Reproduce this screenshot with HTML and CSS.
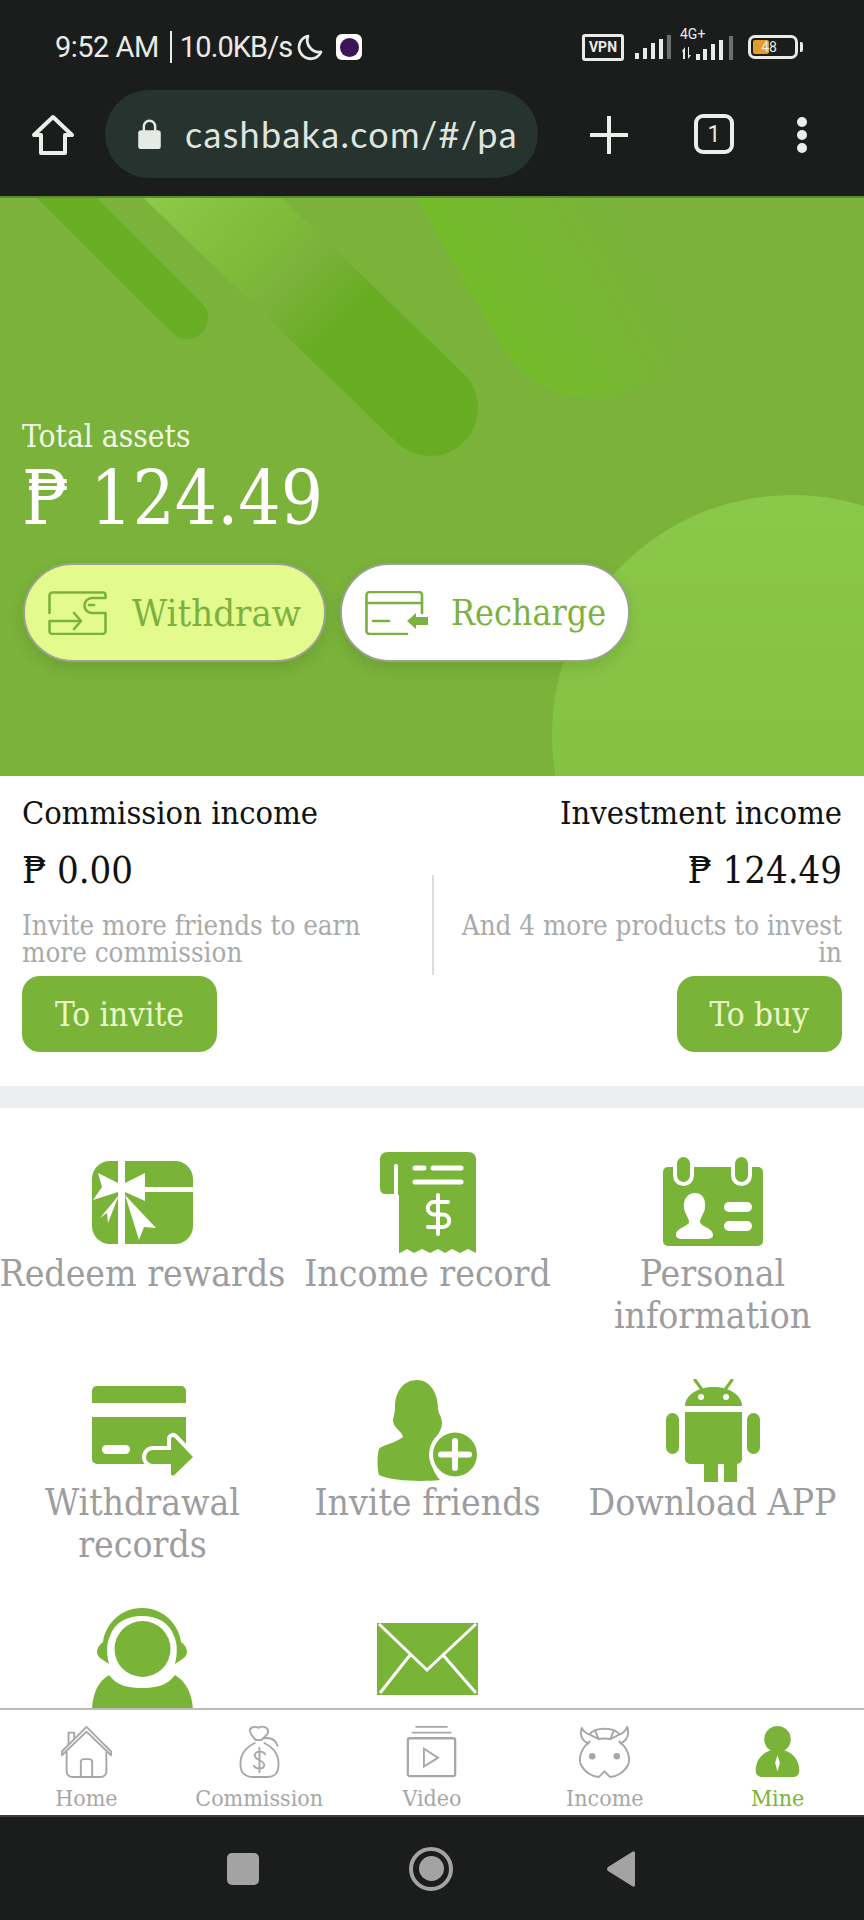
FILE: index.html
```html
<!DOCTYPE html>
<html lang="en">
<head>
<meta charset="utf-8">
<title>Mine</title>
<link rel="stylesheet" href="styles.css">
</head>
<body>
<div class="phone">
  <header class="chrome">
    <div class="status">
      <div class="status-left">
        <span class="time">9:52 AM</span><span class="sep"></span><span class="speed">10.0KB/s</span>
        <svg class="moon" viewBox="0 0 28 28"><path d="M13 3A11.500 11.500 0 1 0 26 19 12 12 0 0 1 13 3Z" fill="none" stroke="#e8ebe6" stroke-width="2.800" stroke-linejoin="round"/></svg>
        <span class="app-badge"><span class="app-dot"></span></span>
      </div>
      <div class="status-right">
        <span class="vpn">VPN</span>
        <svg class="sig" viewBox="0 0 37 26"><g fill="#e8ebe6"><rect x="0" y="19" width="4" height="6"/><rect x="8" y="14" width="4" height="11"/><rect x="16" y="9" width="4" height="16"/><rect x="24" y="5" width="4" height="20"/></g><rect x="32" y="1" width="4" height="24" fill="#6d706d"/></svg>
        <div class="sig2">
          <span class="net">4G+</span>
          <svg class="sig2-svg" viewBox="0 0 57 28"><g fill="#e8ebe6"><path d="M2 18 5 14V26H3V19ZM8 14V26L11 22H9V14Z"/><rect x="16" y="21" width="4" height="6"/><rect x="23" y="16" width="4" height="11"/><rect x="31" y="11" width="4" height="16"/><rect x="39" y="7" width="4" height="20"/></g><rect x="49" y="3" width="4" height="24" fill="#6d706d"/></svg>
        </div>
        <span class="battery"><span class="batt-fill"></span><span class="batt-text">48</span></span><span class="batt-tip"></span>
      </div>
    </div>
    <div class="toolbar">
      <svg class="home-ic" viewBox="0 0 44 44"><path d="M22 4 41 22H34V40H10V22H3Z" fill="none" stroke="#eceeea" stroke-width="4" stroke-linejoin="round"/></svg>
      <div class="urlbar">
        <svg class="lock" viewBox="0 0 26 34"><path d="M7 14V9a6 6 0 0 1 12 0v5" fill="none" stroke="#e6e9e5" stroke-width="2.600"/><rect x="1" y="13" width="24" height="20" rx="3" fill="#e6e9e5"/></svg>
        <span class="url">cashbaka.com/#/pa</span>
      </div>
      <svg class="plus" viewBox="0 0 38 38"><path d="M19 1V37M1 19H37" stroke="#eceeea" stroke-width="4" stroke-linecap="round"/></svg>
      <span class="tabs">1</span>
      <span class="dots"><i></i><i></i><i></i></span>
    </div>
  </header>

  <main class="page">
    <section class="hero">
      <div class="blob blob-a"></div>
      <div class="blob blob-b"></div>
      <div class="blob blob-d"></div>
      <div class="blob blob-e"></div>
      <div class="hero-body">
        <div class="assets-label">Total assets</div>
        <div class="assets-value">₱ 124.49</div>
        <div class="hero-btns">
          <div class="pill pill-lime">
            <svg class="pill-ic" viewBox="0 0 60 44" fill="none" stroke="#7db13f" stroke-width="2.600" stroke-linecap="round" stroke-linejoin="round"><path d="M1.500 22V4.500a3 3 0 0 1 3-3H55a2.500 2.500 0 0 1 2.500 2.500V7H44a7.500 7.500 0 0 0 0 15H57.500V40a3 3 0 0 1-3 3H4.500a3 3 0 0 1-3-3V30H32"/><path d="M26 22 33 30 26 38"/><path d="M41 14H46"/></svg>
            <span>Withdraw</span>
          </div>
          <div class="pill pill-white">
            <svg class="pill-ic pill-ic-wide" viewBox="0 0 64 44" fill="none" stroke="#7db13f" stroke-width="2.600" stroke-linecap="round" stroke-linejoin="round"><path d="M57 22V4a3 3 0 0 0-3-3H4.500a3 3 0 0 0-3 3V40a3 3 0 0 0 3 3H42"/><path d="M1.500 12H57"/><path d="M8 30H24"/><path d="M42 30 51 22V26H63V34H51V38Z" fill="#7db13f" stroke="none"/></svg>
            <span>Recharge</span>
          </div>
        </div>
      </div>
    </section>

    <section class="income">
      <div class="income-col">
        <div class="income-title">Commission income</div>
        <div class="income-value">₱ 0.00</div>
        <div class="income-note">Invite more friends to earn more commission</div>
        <div class="btn">To invite</div>
      </div>
      <div class="income-rule"></div>
      <div class="income-col income-right">
        <div class="income-title">Investment income</div>
        <div class="income-value">₱ 124.49</div>
        <div class="income-note">And 4 more products to invest in</div>
        <div class="btn">To buy</div>
      </div>
    </section>

    <section class="menu">
      <div class="cell">
        <svg class="cell-ic" viewBox="0 0 104 104"><path d="M19 11H27V94H19A18 18 0 0 1 1 76V29A18 18 0 0 1 19 11ZM34 11H84A18 18 0 0 1 102 29V37H34ZM34 42H102V76A18 18 0 0 1 84 94H34Z" fill="#79b439"/><path d="M7 23 27 33H34L54 23V51L34 42H27L2 50 11 37Z" fill="#fff"/><path d="M28 45 9 68 16 63 17 73ZM34 45 65 78 53 77 48 90Z" fill="#fff"/></svg>
        <div class="cell-label cell-label-line">Redeem rewards</div>
      </div>
      <div class="cell">
        <svg class="cell-ic" viewBox="0 0 104 104"><path d="M12 2H92Q100 2 100 10V103L92 99 84 103 76 99 69 103 62 99 54 103 46 99 38 103 31 99 24 103 23 103V44H10Q4 44 4 38V10Q4 2 12 2Z" fill="#79b439"/><rect x="18" y="14" width="4" height="31" rx="2" fill="#fff"/><path d="M22 41H24V45H22Z" fill="#79b439"/><g fill="none" stroke="#fff" stroke-linecap="round"><path d="M39 18H48M57 18H85M39 32H85" stroke-width="5"/><path d="M72 52H58a5.500 5.500 0 0 0 0 12.500H67a6 6 0 0 1 0 12.500H52M62 45V84" stroke-width="4"/></g></svg>
        <div class="cell-label">Income record</div>
      </div>
      <div class="cell">
        <svg class="cell-ic" viewBox="0 0 104 104"><path d="M7 17H97A5 5 0 0 1 102 22V91A5 5 0 0 1 97 96H7A5 5 0 0 1 2 91V22A5 5 0 0 1 7 17Z" fill="#79b439"/><rect x="12" y="2" width="21" height="34" rx="10.500" fill="#fff"/><rect x="70" y="2" width="21" height="34" rx="10.500" fill="#fff"/><rect x="12" y="2" width="21" height="15" fill="#fff"/><rect x="70" y="2" width="21" height="15" fill="#fff"/><rect x="16" y="7" width="13" height="25" rx="6.500" fill="#79b439"/><rect x="74" y="7" width="13" height="25" rx="6.500" fill="#79b439"/><path d="M34 43C42 43 45 50 44 58 43 64 39 68 39 72 39 76 52 78 52 85 52 88 49 89 45 89H22C18 89 15 88 15 85 15 78 28 76 28 72 28 68 24 64 23 58 22 50 26 43 34 43Z" fill="#fff"/><rect x="63" y="52" width="28" height="10" rx="5" fill="#fff"/><rect x="63" y="71" width="28" height="10" rx="5" fill="#fff"/></svg>
        <div class="cell-label">Personal information</div>
      </div>
      <div class="cell">
        <svg class="cell-ic" viewBox="0 0 104 104"><path d="M1 12A5 5 0 0 1 6 7H90A5 5 0 0 1 95 12V24H1ZM1 38H95V85H6A5 5 0 0 1 1 80Z" fill="#79b439"/><rect x="11" y="66" width="28" height="9" rx="4.500" fill="#fff"/><path d="M62 71H80V60a2 2 0 0 1 3.400-1.500L102 78 83.400 96A2 2 0 0 1 80 94.500V85H62a7 7 0 0 1 0-14Z" fill="#fff" stroke="#fff" stroke-width="8" stroke-linejoin="round"/><path d="M62 71H80V60a2 2 0 0 1 3.400-1.500L102 78 83.400 96A2 2 0 0 1 80 94.500V85H62a7 7 0 0 1 0-14Z" fill="#79b439"/></svg>
        <div class="cell-label">Withdrawal records</div>
      </div>
      <div class="cell">
        <svg class="cell-ic" viewBox="0 0 104 104"><path d="M41 1C54 1 62 14 62 30 63 36 66 38 66 44 66 52 60 56 58 66 52 80 56 92 64 101 44 103 16 102 3 96 1 90 1 76 3 70 6 66 20 64 27 58 26 52 18 50 17 42 17 38 19 36 19 28 19 12 28 1 41 1Z" fill="#79b439"/><circle cx="79" cy="75.500" r="26" fill="#fff"/><circle cx="79" cy="75.500" r="22" fill="#79b439"/><path d="M79 62V89M65 75.500H93" stroke="#fff" stroke-width="6" stroke-linecap="round"/></svg>
        <div class="cell-label">Invite friends</div>
      </div>
      <div class="cell">
        <svg class="cell-ic" viewBox="0 0 104 104"><path d="M24 27C24 16 37 8 52.500 8S81 16 81 27Z" fill="#79b439"/><path d="M34 1 42 12M71 1 63 12" stroke="#79b439" stroke-width="3" stroke-linecap="round"/><circle cx="40" cy="18" r="3" fill="#fff"/><circle cx="65" cy="18" r="3" fill="#fff"/><path d="M24 33H81V80A5 5 0 0 1 76 85V103H63V85H57V103H43V85H29A5 5 0 0 1 24 80Z" fill="#79b439"/><rect x="5" y="34" width="13" height="41" rx="6.500" fill="#79b439"/><rect x="86" y="34" width="13" height="41" rx="6.500" fill="#79b439"/></svg>
        <div class="cell-label">Download APP</div>
      </div>
      <div class="cell">
        <svg class="cell-ic" viewBox="0 0 104 104"><path d="M51 0C28 0 14 18 12 34 4 40 4 48 12 52L18 56C15 44 16 34 19 28 24 14 36 8 51 8S78 14 83 28C86 34 87 44 84 56L90 52C98 48 98 40 90 34 88 18 74 0 51 0Z" fill="#79b439"/><path d="M18 67C6 74 1 88 1 104H102C102 88 96 74 84 67 76 78 64 80 51 80S26 78 18 67Z" fill="#79b439"/><ellipse cx="51.500" cy="41" rx="28" ry="28" fill="#79b439"/></svg>
      </div>
      <div class="cell">
        <svg class="cell-ic" viewBox="0 0 104 104"><rect x="1" y="15" width="101" height="72" fill="#79b439"/><path d="M3 16 51 62 100 16M34 47 4 85M67 47 100 85" fill="none" stroke="#fff" stroke-width="3"/></svg>
      </div>
    </section>
  </main>

  <nav class="tabbar">
    <div class="tab">
      <svg class="tab-ic" viewBox="0 0 56 56" fill="none" stroke="#a6a7a6" stroke-width="2" stroke-linejoin="round"><path d="M2 28 28 2 54 28 54 32 28 7 2 32Z"/><path d="M7 28V49a6 6 0 0 0 6 6H43a6 6 0 0 0 6-6V28"/><path d="M22 55V39a3 3 0 0 1 3-3h6a3 3 0 0 1 3 3V55"/><path d="M9 21V8H15V15"/></svg>
      <span>Home</span>
    </div>
    <div class="tab">
      <svg class="tab-ic" viewBox="0 0 56 56" fill="none" stroke="#a6a7a6" stroke-width="2" stroke-linecap="round" stroke-linejoin="round"><path d="M18 7C17 2 23 1 27 3 32 0 38 3 37 8 36 12 32 13 30 16H24C22 13 19 11 18 7Z"/><path d="M24 16H30M33 14C40 13 45 16 47 22"/><path d="M23 19C13 24 7 32 8 43 8 50 13 55 21 55H36C44 55 48 50 48 43 49 32 43 24 33 19"/><path d="M34 31C32 27 24 27 23 32 22 37 34 37 33 43 32 47 24 47 22 43M28 24V50"/></svg>
      <span>Commission</span>
    </div>
    <div class="tab">
      <svg class="tab-ic" viewBox="0 0 56 56" fill="none" stroke="#a6a7a6" stroke-width="2"><path d="M11 2H45M7 8H49"/><rect x="3" y="14" width="50" height="40" rx="2" stroke-width="2.400"/><path d="M20 25V44L35 34.500Z"/></svg>
      <span>Video</span>
    </div>
    <div class="tab">
      <svg class="tab-ic" viewBox="0 0 56 56" fill="none" stroke="#a6a7a6" stroke-width="2" stroke-linejoin="round"><path d="M12 20C5 17 1 12 4 3 6 7 9 9 12 10 18 2 38 2 44 10 47 9 50 7 52 2 55 12 51 17 44 20"/><path d="M12 10C18 13 22 15 22 15 24 14 32 14 34 15L44 10M22 15 18 6M34 15 38 6"/><path d="M13 17C4 24 0 34 3 42 7 50 16 55 22 55L28 49 34 55C40 55 49 50 53 42 56 34 52 24 43 17"/><circle cx="15" cy="33" r="3.500" fill="#a6a7a6" stroke="none"/><circle cx="41" cy="33" r="3.500" fill="#a6a7a6" stroke="none"/></svg>
      <span>Income</span>
    </div>
    <div class="tab tab-active">
      <svg class="tab-ic" viewBox="0 0 56 56"><circle cx="28" cy="15" r="14" fill="#79b439"/><path d="M20 27C12 30 5 37 5 48 5 53 8 55 13 55H43C48 55 51 53 51 48 51 37 44 30 36 27Z" fill="#79b439"/><path d="M28 32 30.500 40 28 49 25.500 40Z" fill="#fff"/></svg>
      <span>Mine</span>
    </div>
  </nav>

  <footer class="sysnav">
    <span class="nav-square"></span>
    <span class="nav-circle"><i></i></span>
    <svg class="nav-back" viewBox="0 0 30 38"><path d="M29 3V35Q29 38 26 36L2 21Q0 19 2 17L26 2Q29 0 29 3Z" fill="#a3a3a3"/></svg>
  </footer>
</div>
</body>
</html>
```

FILE: styles.css
```css
* { box-sizing: border-box; }
html, body { margin: 0; padding: 0; }
body { width: 864px; height: 1920px; overflow: hidden; background: #fff; font-family: "DejaVu Serif", "Liberation Serif", serif; font-stretch: condensed; }
.phone { width: 864px; height: 1920px; display: flex; flex-direction: column; overflow: hidden; }

.chrome { height: 198px; background: #1b1d1c; border-bottom: 2px solid #5d8a34; flex: none; color: #e8ebe6; font-family: Roboto, "Open Sans", sans-serif; font-stretch: normal; }
.status { height: 90px; padding: 4px 61px 0 55px; display: flex; justify-content: space-between; align-items: center; }
.status-left { display: flex; align-items: center; }
.time { font-size: 29px; letter-spacing: -0.5px; }
.sep { width: 2px; height: 32px; background: #e8ebe6; margin: 0 8px 0 11px; }
.speed { font-size: 29px; letter-spacing: -0.9px; }
.moon { width: 28px; height: 28px; margin-left: 3px; }
.app-badge { width: 26px; height: 26px; margin-left: 13px; border-radius: 6px; background: #fff; display: flex; align-items: center; justify-content: center; }
.app-dot { width: 19px; height: 19px; border-radius: 50%; background: #3c1458; }
.status-right { display: flex; align-items: center; }
.vpn { width: 42px; height: 27px; border: 3px solid #e8ebe6; border-radius: 3px; font-size: 14px; font-weight: 700; display: flex; align-items: center; justify-content: center; }
.sig { width: 37px; height: 26px; margin-left: 11px; }
.sig2 { position: relative; width: 57px; height: 28px; margin-left: 8px; }
.sig2-svg { width: 57px; height: 28px; display: block; }
.net { position: absolute; left: 0; top: -6px; font-size: 14px; line-height: 14px; }
.battery { position: relative; width: 50px; height: 24px; margin-left: 11px; border: 3px solid #e8ebe6; border-radius: 7px; overflow: hidden; display: block; }
.batt-fill { position: absolute; left: 2px; top: 2px; bottom: 2px; width: 16px; background: #e29c2a; border-radius: 2px; }
.batt-text { position: absolute; left: 6px; top: 0; width: 24px; text-align: center; font-size: 14px; line-height: 18px; }
.batt-tip { width: 3px; height: 10px; margin-left: 2px; background: #e8ebe6; border-radius: 0 2px 2px 0; }

.toolbar { height: 106px; display: flex; align-items: flex-start; }
.home-ic { width: 44px; height: 44px; margin: 23px 0 0 31px; flex: none; }
.urlbar { width: 433px; height: 88px; margin-left: 30px; border-radius: 44px; background: #26332e; display: flex; align-items: center; padding-left: 32px; flex: none; overflow: hidden; }
.lock { width: 25px; height: 32px; flex: none; }
.url { font-size: 36px; letter-spacing: 1.3px; margin-left: 23px; color: #dfe4df; white-space: nowrap; font-family: Lato, "Open Sans", sans-serif; }
.plus { width: 38px; height: 38px; margin: 26px 0 0 52px; flex: none; }
.tabs { width: 40px; height: 40px; margin: 24px 0 0 66px; border: 4px solid #eceeea; border-radius: 9px; flex: none; font-size: 23px; display: flex; align-items: center; justify-content: center; }
.dots { margin: 27px 0 0 63px; display: flex; flex-direction: column; gap: 3px; flex: none; }
.dots i { width: 10px; height: 10px; border-radius: 50%; background: #eceeea; display: block; }

.page { flex: 1; min-height: 0; overflow: hidden; }
.hero { position: relative; height: 578px; background: #7ab23a; overflow: hidden; }
.blob { position: absolute; }
.blob-a { left: 166px; top: -159px; width: 42px; height: 300px; border-radius: 21px; transform: rotate(-45deg); transform-origin: 21px 279px; background: #69ad25; }
.blob-b { left: 382px; top: -342px; width: 96px; height: 600px; border-radius: 48px; transform: rotate(-46deg); transform-origin: 48px 552px; background: linear-gradient(to top, #67ac22 0, #67ac22 170px, #7ab23a 235px, #80bc3a 290px, #8cc948 390px); }
.blob-d { left: 490px; top: -300px; width: 200px; height: 500px; border-radius: 100px; transform: rotate(-30deg); transform-origin: 100px 400px; background: linear-gradient(to right, #74bc2a, rgba(122, 178, 58, 0) 85%); }
.blob-e { left: 552px; top: 297px; width: 480px; height: 480px; border-radius: 50%; background: linear-gradient(to bottom, #8ac84a, #81bc3d); }
.hero-body { position: relative; padding: 218px 0 0 22px; color: #fff; }
.assets-label { font-size: 31.500px; line-height: 40px; color: #f2f8e8; white-space: nowrap; }
.assets-value { font-size: 74px; line-height: 84px; white-space: nowrap; }
.hero-btns { display: flex; gap: 14px; margin-top: 23px; margin-left: 1px; }
.pill { height: 99px; border-radius: 50px; border: 2px solid #9aa38f; display: flex; align-items: center; padding-left: 23px; font-size: 35.500px; color: #7db13f; white-space: nowrap; box-shadow: 0 6px 14px rgba(70, 100, 30, .22); }
.pill-lime { width: 303px; background: #e2fb8c; font-size: 38px; }
.pill-white { width: 290px; background: #fff; }
.pill-ic { width: 60px; height: 44px; margin-right: 24px; flex: none; }
.pill-ic-wide { width: 64px; margin-right: 22px; }

.income { position: relative; height: 310px; display: flex; justify-content: space-between; padding: 17px 22px 0; }
.income-col { width: 395px; display: flex; flex-direction: column; align-items: flex-start; }
.income-right { align-items: flex-end; text-align: right; }
.income-title { font-size: 32.400px; line-height: 40px; color: #111; white-space: nowrap; }
.income-value { font-size: 38px; line-height: 50px; margin-top: 12px; color: #111; white-space: nowrap; }
.income-note { font-size: 27.500px; line-height: 27px; margin-top: 17px; color: #aaa; width: 100%; }
.btn { height: 76px; margin-top: 10px; padding: 0 33px; border-radius: 18px; background: #79b439; color: #eaf8c9; font-size: 33px; display: flex; align-items: center; white-space: nowrap; }
.income-rule { position: absolute; left: 432px; top: 99px; width: 2px; height: 100px; background: #ddd; }

.menu { border-top: 22px solid #eceef0; display: grid; grid-template-columns: repeat(3, 285px); padding-top: 42px; }
.cell { display: flex; flex-direction: column; align-items: center; text-align: center; height: 229px; }
.cell-ic { width: 104px; height: 104px; flex: none; }
.cell-label { font-size: 37px; line-height: 42px; color: #9d9d9f; margin-top: -1px; }
.cell-label-line { white-space: nowrap; }

.tabbar { height: 109px; flex: none; border-top: 2px solid #bbb; border-bottom: 2px solid #3d3d3d; background: #fff; display: flex; }
.tab { flex: 1; display: flex; flex-direction: column; align-items: center; padding-top: 15px; font-size: 23px; line-height: 30px; color: #a6a7a6; white-space: nowrap; }
.tab-ic { width: 53px; height: 53px; flex: none; margin-bottom: 5px; }
.tab-active { color: #79b439; }

.sysnav { height: 103px; flex: none; background: #1b1d1c; display: flex; align-items: center; }
.nav-square { width: 32px; height: 32px; border-radius: 5px; background: #a3a3a3; margin-left: 227px; }
.nav-circle { width: 44px; height: 44px; border-radius: 50%; border: 4px solid #a3a3a3; margin-left: 150px; display: flex; align-items: center; justify-content: center; }
.nav-circle i { width: 25px; height: 25px; border-radius: 50%; background: #a3a3a3; display: block; }
.nav-back { width: 30px; height: 38px; margin-left: 153px; }
```
